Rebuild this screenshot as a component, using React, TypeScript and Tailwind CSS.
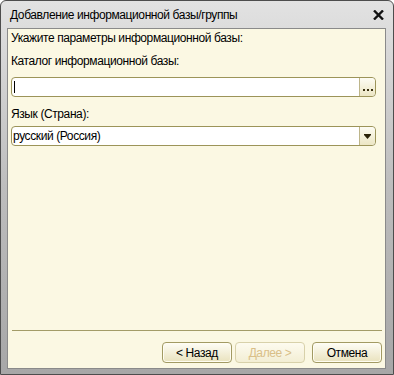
import React from 'react';

const font = { fontFamily: '"Liberation Sans", Arial, sans-serif' };

function CloseIcon() {
  return (
    <svg width="11" height="10" viewBox="0 0 11 10">
      <path d="M1 0.5 L10 9.5 M10 0.5 L1 9.5" stroke="#111" strokeWidth="2.4" />
    </svg>
  );
}

function FieldButton({ kind }: { kind: 'dots' | 'arrow' }) {
  return (
    <div className="flex w-[16px] items-end justify-center rounded-r-[4px] border-l border-[#bdb58a] bg-gradient-to-b from-[#fdfcf3] to-[#ece6c4] pb-[4px]">
      {kind === 'dots' ? (
        <div className="mb-[1px] flex gap-[2px]">
          <span className="h-[2px] w-[2px] bg-[#3a3010]" />
          <span className="h-[2px] w-[2px] bg-[#3a3010]" />
          <span className="h-[2px] w-[2px] bg-[#3a3010]" />
        </div>
      ) : (
        <svg width="7" height="5" viewBox="0 0 7 5" className="mb-[2px]">
          <path d="M0 0 H7 V1 L3.5 5 L0 1 Z" fill="#2a2208" />
        </svg>
      )}
    </div>
  );
}

function WizardButton({ label, disabled }: { label: string; disabled?: boolean }) {
  return (
    <div
      className={
        disabled
          ? 'flex h-[21px] w-[70px] items-center justify-center rounded-[4px] border border-[#d8d1aa] bg-gradient-to-b from-[#fdfbef] to-[#f3eed4] text-[12px] text-[#d9bf88]'
          : 'flex h-[21px] w-[70px] items-center justify-center rounded-[4px] border border-[#a29a63] bg-gradient-to-b from-[#fefdf6] to-[#e9e2bd] text-[12px] text-black shadow-[inset_0_0_0_1px_#fffdf2]'
      }
    >
      {label}
    </div>
  );
}

export default function App() {
  return (
    <div className="h-[375px] w-[394px] bg-white tracking-[-0.4px]" style={font}>
      <div className="flex h-full w-full flex-col rounded-t-[6px] border border-[#4d4d4d] bg-gradient-to-b from-[#e2e2e2] via-[#bdbdbd] to-[#a7a7a7]">
        <div className="flex h-[27px] items-center justify-between pl-[9px] pr-[9px]">
          <span className="text-[12px] text-black">Добавление информационной базы/группы</span>
          <CloseIcon />
        </div>
        <div className="flex flex-1 px-[6px] pb-[5px] pr-[7px]">
          <div className="flex flex-1 flex-col border border-[#8a8a8a] bg-[#fbf8e3] pl-[3px] pr-[2px] pt-[1px] text-[12px] leading-[16px] text-black">
            <div>Укажите параметры информационной базы:</div>
            <div className="mt-[7px]">Каталог информационной базы:</div>
            <div className="mr-[7px] mt-[8px] flex h-[20px] rounded-[4px] border border-[#9c9459] bg-white">
              <div className="flex flex-1 items-center pl-[2px]">
                <span className="h-[12px] w-[1px] bg-black" />
              </div>
              <FieldButton kind="dots" />
            </div>
            <div className="mt-[9px]">Язык (Страна):</div>
            <div className="mr-[7px] mt-[4px] flex h-[20px] rounded-[4px] border border-[#9c9459] bg-white">
              <div className="flex flex-1 items-center pl-[1px]">русский (Россия)</div>
              <FieldButton kind="arrow" />
            </div>
            <div className="flex-1" />
            <div className="ml-[1px] mr-[1px] h-[1px] bg-[#a39c68]" />
            <div className="mr-[1px] mt-[11px] flex justify-end gap-[3px]">
              <WizardButton label="< Назад" />
              <WizardButton label="Далее >" disabled />
              <div className="w-[1px]" />
              <WizardButton label="Отмена" />
            </div>
            <div className="h-[5px]" />
          </div>
        </div>
      </div>
    </div>
  );
}
